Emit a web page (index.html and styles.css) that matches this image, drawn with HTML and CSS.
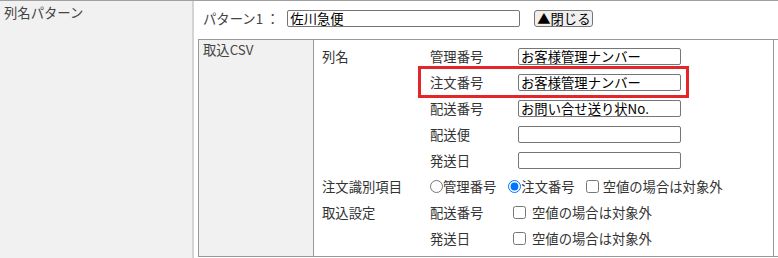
FILE: index.html
```html
<!DOCTYPE html>
<html lang="ja">
<head>
    <meta charset="UTF-8">
    <meta name="viewport" content="width=device-width, initial-scale=1.0">
    <title>列名パターン</title>
    <link rel="stylesheet" href="styles.css">
</head>
<body>
    <div class="setting-row">
        <div class="row-head">列名パターン</div>
        <div class="row-body">
            <div class="pattern-line">
                <span class="pattern-label">パターン1 ：</span>
                <input type="text" class="pattern-name" value="佐川急便">
                <button type="button" class="close-btn">▲閉じる</button>
            </div>

            <div class="csv-box">
                <div class="csv-head">取込CSV</div>
                <div class="csv-body">
                    <div class="csv-grid">
                        <div class="cell">列名</div>
                        <div class="cell">管理番号</div>
                        <div class="cell"><input type="text" class="col-input" value="お客様管理ナンバー"></div>

                        <div class="cell"></div>
                        <div class="cell">注文番号</div>
                        <div class="cell"><input type="text" class="col-input" value="お客様管理ナンバー"></div>

                        <div class="cell"></div>
                        <div class="cell">配送番号</div>
                        <div class="cell"><input type="text" class="col-input" value="お問い合せ送り状No."></div>

                        <div class="cell"></div>
                        <div class="cell">配送便</div>
                        <div class="cell"><input type="text" class="col-input" value=""></div>

                        <div class="cell"></div>
                        <div class="cell">発送日</div>
                        <div class="cell"><input type="text" class="col-input" value=""></div>

                        <div class="cell">注文識別項目</div>
                        <div class="cell span-2">
                            <label class="opt"><input type="radio" name="orderKey" class="radio-first">管理番号</label>
                            <label class="opt"><input type="radio" name="orderKey" class="radio-next" checked>注文番号</label>
                            <label class="opt"><input type="checkbox" class="check-inline">空値の場合は対象外</label>
                        </div>

                        <div class="cell">取込設定</div>
                        <div class="cell">配送番号</div>
                        <div class="cell"><label class="opt"><input type="checkbox" class="check">空値の場合は対象外</label></div>

                        <div class="cell"></div>
                        <div class="cell">発送日</div>
                        <div class="cell"><label class="opt"><input type="checkbox" class="check">空値の場合は対象外</label></div>
                    </div>
                    <div class="highlight"></div>
                </div>
                <div class="csv-rest"></div>
            </div>
        </div>
    </div>
</body>
</html>
```

FILE: styles.css
```css
* { box-sizing: border-box; }
body {
    margin: 0;
    font-family: "Noto Sans CJK JP", "Noto Sans", sans-serif;
    font-size: 13.33px;
    color: #333;
    background: #fff;
    overflow: hidden;
}
input, button {
    font-family: inherit;
    font-size: 13.33px;
    color: #000;
}

.setting-row {
    display: flex;
    border-top: 1px solid #a0a0a0;
    min-height: 100vh;
}
.row-head {
    width: 194px;
    flex-shrink: 0;
    background: #f1f1f1;
    border-right: 2px solid #d4d4d4;
    padding: 3px 0 0 4px;
    line-height: 18px;
    color: #444;
}
.row-body {
    flex: 1;
    display: flex;
    flex-direction: column;
}

.pattern-line {
    height: 38px;
    display: flex;
    align-items: center;
    padding: 0 0 4px 9px;
    color: #444;
}
.pattern-label { margin-right: 8px; }
.pattern-name {
    width: 233px;
    height: 17px;
    padding: 0 2px;
    border: 1px solid #767676;
    border-radius: 2px;
    line-height: 15px;
}
.close-btn {
    margin-left: 14px;
    width: 59px;
    height: 17px;
    padding: 0;
    border: 1px solid #767676;
    border-radius: 3px;
    background: #efefef;
    line-height: 15px;
}

.csv-box {
    display: flex;
    margin-left: 4px;
    border-top: 1px solid #999;
    border-left: 1px solid #999;
    border-bottom: 1px solid #999;
    height: 218px;
}
.csv-head {
    width: 115px;
    flex-shrink: 0;
    background: #f1f1f1;
    border-right: 1px solid #999;
    padding: 2px 0 0 4px;
    line-height: 16px;
    color: #444;
}
.csv-body {
    position: relative;
    width: 460px;
    flex-shrink: 0;
    border-right: 1px solid #999;
    padding: 3px 0 0 8px;
}
.csv-rest { flex: 1; }

.csv-grid {
    display: grid;
    grid-template-columns: 108px 83px 1fr;
    grid-auto-rows: 26px;
}
.cell {
    display: flex;
    align-items: center;
    white-space: nowrap;
}
.span-2 { grid-column: span 2; }

.col-input {
    margin-left: 5px;
    width: 163px;
    height: 17px;
    padding: 0 2px;
    border: 1px solid #767676;
    border-radius: 2px;
    line-height: 15px;
}

.opt {
    display: flex;
    align-items: center;
}
.opt input {
    width: 13px;
    height: 13px;
    margin: 0;
}
.radio-next { margin-left: 12px !important; }
.check-inline { margin: 0 4px 0 11px !important; }
.check { margin: 0 6px 0 0 !important; }

.highlight {
    position: absolute;
    left: 104px;
    top: 26px;
    width: 271px;
    height: 32px;
    border: 3px solid #e4262b;
    pointer-events: none;
}
```
